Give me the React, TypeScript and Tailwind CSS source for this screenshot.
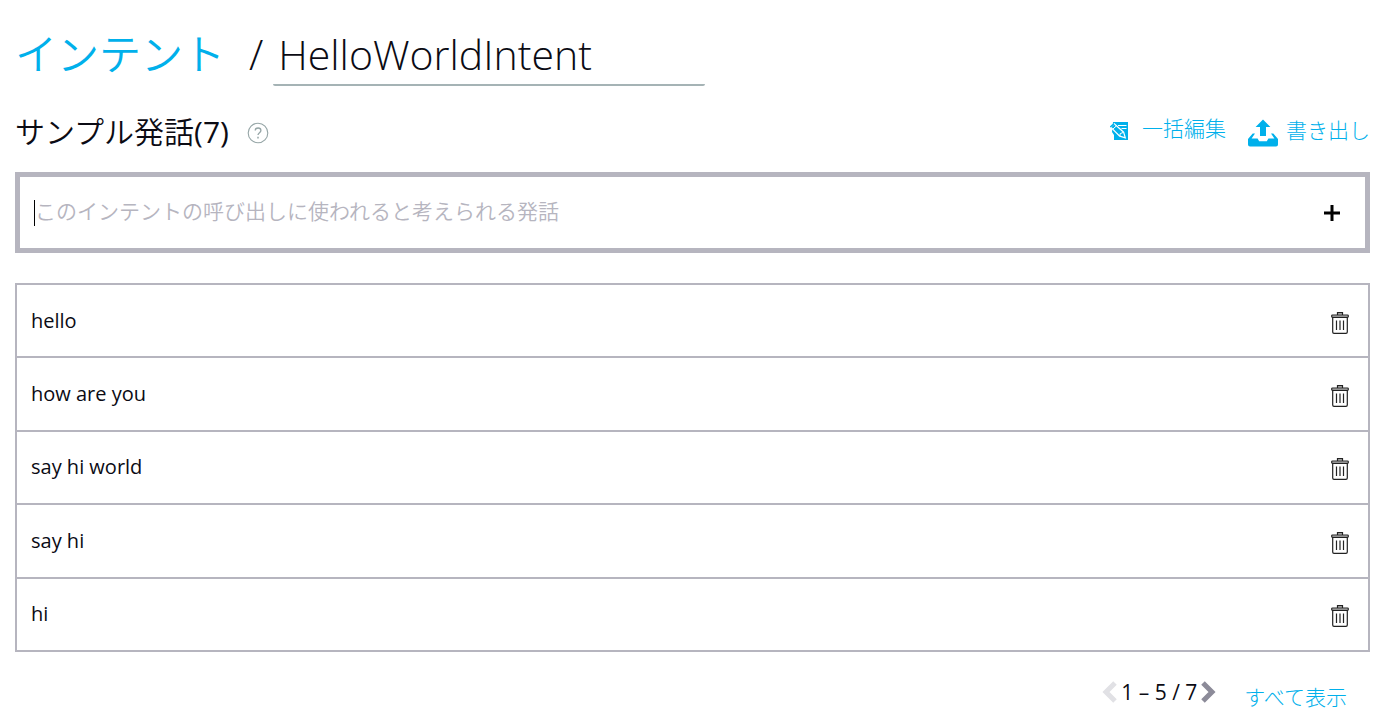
import { useState } from "react";

const utterances = ["hello", "how are you", "say hi world", "say hi", "hi"];

function HelpIcon() {
  return (
    <svg width="22" height="22" viewBox="0 0 22 22" fill="none" stroke="#95a5a6" aria-hidden="true">
      <circle cx="11" cy="11" r="9.8" strokeWidth="1.1" />
      <path d="M8.2 8.6c0-1.7 1.2-2.6 2.9-2.6s2.8 1 2.8 2.5c0 2.3-2.9 2.2-2.9 4.6" strokeWidth="1.3" />
      <path d="M11 14.8v1.8" strokeWidth="1.5" />
    </svg>
  );
}

function BulkEditIcon() {
  return (
    <svg width="20" height="20" viewBox="0 0 20 20" aria-hidden="true">
      <path d="M3 1h15v18H4v-5L2 11z" fill="#00b0eb" />
      <path d="M8 4.500h8.500M11.500 7.500h5" stroke="#fff" strokeWidth="1" />
      <path d="M0.500 6 4.300 2.700 13.600 11.200 15.300 16.800 9.700 15.200z" fill="#00b0eb" stroke="#fff" strokeWidth="1.200" />
      <path d="M2.700 8.200 6.500 4.800M9.900 15l0.300-2.400 3.200-1.200" stroke="#fff" strokeWidth="1" fill="none" />
      <path d="M0.300 6 4 2.900" stroke="#00b0eb" strokeWidth="1.500" />
    </svg>
  );
}

function ExportIcon() {
  return (
    <svg width="30" height="28" viewBox="0 0 30 28" fill="#00b0eb" aria-hidden="true">
      <path d="M15 0.5 22.4 8H18v9h-6V8H7.600z" />
      <path d="M7 14.600 3.600 19.500H9.600l1.600 2.700h7.600l1.600-2.700h6L23 14.600h2.300L30 20v5.500q0 2-2 2H2q-2 0-2-2V20l4.700-5.400z" />
    </svg>
  );
}

function TrashIcon() {
  return (
    <svg width="18" height="22" viewBox="0 0 18 22" fill="none" stroke="#222" aria-hidden="true">
      <path d="M6.500 3V0.700h5V3" fill="#ccc" strokeWidth="1.2" />
      <rect x="0.700" y="3" width="16.600" height="2.400" rx="0.800" fill="#bbb" strokeWidth="1.200" />
      <path d="M1.700 5.500V20q0 1.300 1.300 1.300h12q1.300 0 1.300-1.300V5.500" strokeWidth="1.200" />
      <path d="M5.500 8.500v9.500M9 8.500v9.500M12.500 8.500v9.500" strokeWidth="1.200" />
    </svg>
  );
}

function Chevron({ next = false }: { next?: boolean }) {
  return (
    <svg width="15" height="22" viewBox="0 0 15 22" fill="none" strokeWidth="5" aria-hidden="true">
      {next ? <path d="M2 2l9 9-9 9" stroke="#8c8b99" /> : <path d="M13 2l-9 9 9 9" stroke="#e1e1e5" />}
    </svg>
  );
}

export default function App() {
  const [name, setName] = useState("HelloWorldIntent");
  const [draft, setDraft] = useState("");

  return (
    <main className="bg-white px-4 pt-6 pl-[15px] font-['Open_Sans','Noto_Sans_CJK_JP',sans-serif] text-[#0b0b14]">
      <header className="flex items-start text-[42px] leading-[60px] font-light">
        <a href="#intents" className="font-[350] text-[#00b0eb]">インテント</a>
        <span className="ml-6">/</span>
        <input
          aria-label="インテント名"
          value={name}
          onChange={(e) => setName(e.target.value)}
          className="ml-[10px] h-[62px] w-[432px] rounded-xs border-b-2 border-[#a5b3b5] pl-[5px] text-[41px] outline-none"
        />
      </header>

      <section>
        <div className="mt-6 flex h-[44px] items-center">
          <h2 className="text-[30px] leading-[44px] font-[350]">
            サンプル発話<span className="font-medium">(7)</span>
          </h2>
          <button type="button" aria-label="ヘルプ" className="ml-[18px] pt-0.5">
            <HelpIcon />
          </button>
          <div className="ml-auto flex items-center text-[21px] leading-[30px] font-light text-[#00b0eb]">
            <button type="button" className="flex items-center gap-3 pb-0.5">
              <BulkEditIcon />
              <span className="pb-1.5">一括編集</span>
            </button>
            <button type="button" className="ml-[22px] flex items-center gap-2 pt-0.5">
              <ExportIcon />
              <span className="pb-1.5">書き出し</span>
            </button>
          </div>
        </div>

        <form
          onSubmit={(e) => e.preventDefault()}
          className="mt-[18px] flex h-[81px] items-center border-[5px] border-[#b6b5bf] pr-[25px] pl-[14px]"
        >
          <span aria-hidden="true" className="h-[26px] w-px bg-black" />
          <input
            aria-label="サンプル発話"
            value={draft}
            onChange={(e) => setDraft(e.target.value)}
            placeholder="このインテントの呼び出しに使われると考えられる発話"
            className="h-[32px] min-w-0 flex-1 pb-1 text-[21px] font-[350] outline-none placeholder:text-[#b6b5bf]"
          />
          <button type="submit" aria-label="追加">
            <svg width="16" height="16" viewBox="0 0 16 16" stroke="#000" strokeWidth="3" aria-hidden="true">
              <path d="M8 0v16M0 8h16" />
            </svg>
          </button>
        </form>

        <ul className="mt-[30px] grid min-h-[369px] auto-rows-fr border-2 border-b-0 border-[#b6b5bf]">
          {utterances.map((text) => (
            <li
              key={text}
              className="flex items-center justify-between border-b-2 border-[#b6b5bf] pr-[19px] pl-[14px] text-[20px] leading-[30px]"
            >
              <span>{text}</span>
              <button type="button" aria-label={`${text} を削除`} className="pt-1">
                <TrashIcon />
              </button>
            </li>
          ))}
        </ul>

        <nav aria-label="ページ" className="mt-6 flex items-start justify-end pr-[23px]">
          <div className="flex items-center gap-1 text-[21px] leading-[32px]">
            <button type="button" aria-label="前へ" disabled>
              <Chevron />
            </button>
            <span>1 – 5 / 7</span>
            <button type="button" aria-label="次へ">
              <Chevron next />
            </button>
          </div>
          <a href="#all" className="ml-7 pt-1.5 text-[21px] leading-[30px] font-light text-[#00b0eb]">すべて表示</a>
        </nav>
      </section>
    </main>
  );
}
